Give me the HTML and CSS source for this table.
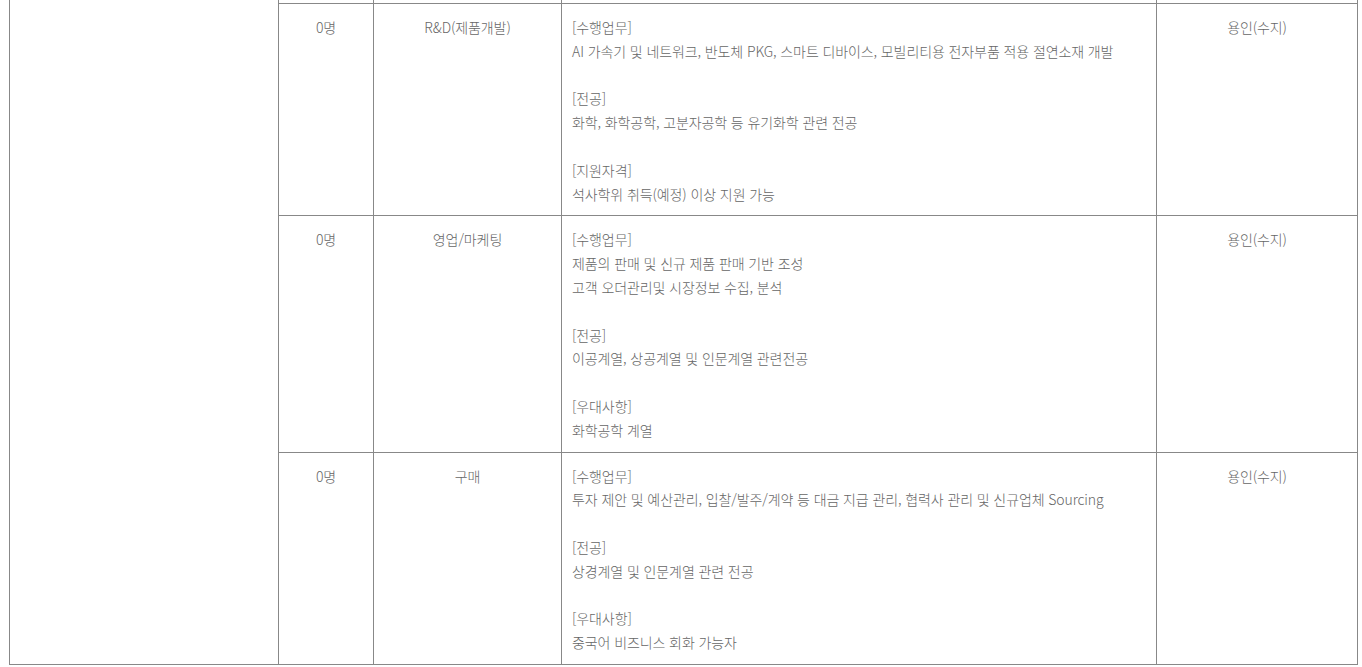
FILE: index.html
```html
<!DOCTYPE html>
<html lang="ko">
<head>
<meta charset="utf-8">
<title>채용 모집분야</title>
<link rel="stylesheet" href="styles.css">
</head>
<body>
<table class="recruit">
  <colgroup>
    <col class="c-group">
    <col class="c-count">
    <col class="c-field">
    <col class="c-desc">
    <col class="c-place">
  </colgroup>
  <tbody>
    <tr class="tail">
      <td class="group" rowspan="4"></td>
      <td></td><td></td><td></td><td></td>
    </tr>
    <tr>
      <td class="center">0명</td>
      <td class="center">R&amp;D(제품개발)</td>
      <td class="desc">[수행업무]<br>AI 가속기 및 네트워크, 반도체 PKG, 스마트 디바이스, 모빌리티용 전자부품 적용 절연소재 개발<br><br>[전공]<br>화학, 화학공학, 고분자공학 등 유기화학 관련 전공<br><br>[지원자격]<br>석사학위 취득(예정) 이상 지원 가능</td>
      <td class="center">용인(수지)</td>
    </tr>
    <tr>
      <td class="center">0명</td>
      <td class="center">영업/마케팅</td>
      <td class="desc">[수행업무]<br>제품의 판매 및 신규 제품 판매 기반 조성<br>고객 오더관리및 시장정보 수집, 분석<br><br>[전공]<br>이공계열, 상공계열 및 인문계열 관련전공<br><br>[우대사항]<br>화학공학 계열</td>
      <td class="center">용인(수지)</td>
    </tr>
    <tr>
      <td class="center">0명</td>
      <td class="center">구매</td>
      <td class="desc">[수행업무]<br>투자 제안 및 예산관리, 입찰/발주/계약 등 대금 지급 관리, 협력사 관리 및 신규업체 Sourcing<br><br>[전공]<br>상경계열 및 인문계열 관련 전공<br><br>[우대사항]<br>중국어 비즈니스 회화 가능자</td>
      <td class="center">용인(수지)</td>
    </tr>
  </tbody>
</table>
</body>
</html>
```

FILE: styles.css
```css
html, body {
  margin: 0;
  padding: 0;
  background: #fff;
}

body {
  font-family: "Noto Sans CJK KR", "Noto Sans", sans-serif;
  color: #666;
}

.recruit {
  margin-left: 9px;
  width: 1349px;
  border-collapse: collapse;
  table-layout: fixed;
  font-size: 14px;
  font-weight: 300;
  letter-spacing: -0.1px;
  line-height: 23.8px;
}

.c-group { width: 269px; }
.c-count { width: 95px; }
.c-field { width: 188px; }
.c-desc { width: 595px; }
.c-place { width: 201px; }

.recruit td {
  border: 1px solid #888;
  padding: 12px 10px 9px;
  vertical-align: top;
}

.recruit .tail td {
  padding: 0;
  height: 3px;
  line-height: 0;
  border-top: none;
}

.recruit .tail td.group {
  height: auto;
}

.center {
  text-align: center;
}

.desc {
  text-align: left;
}
```
